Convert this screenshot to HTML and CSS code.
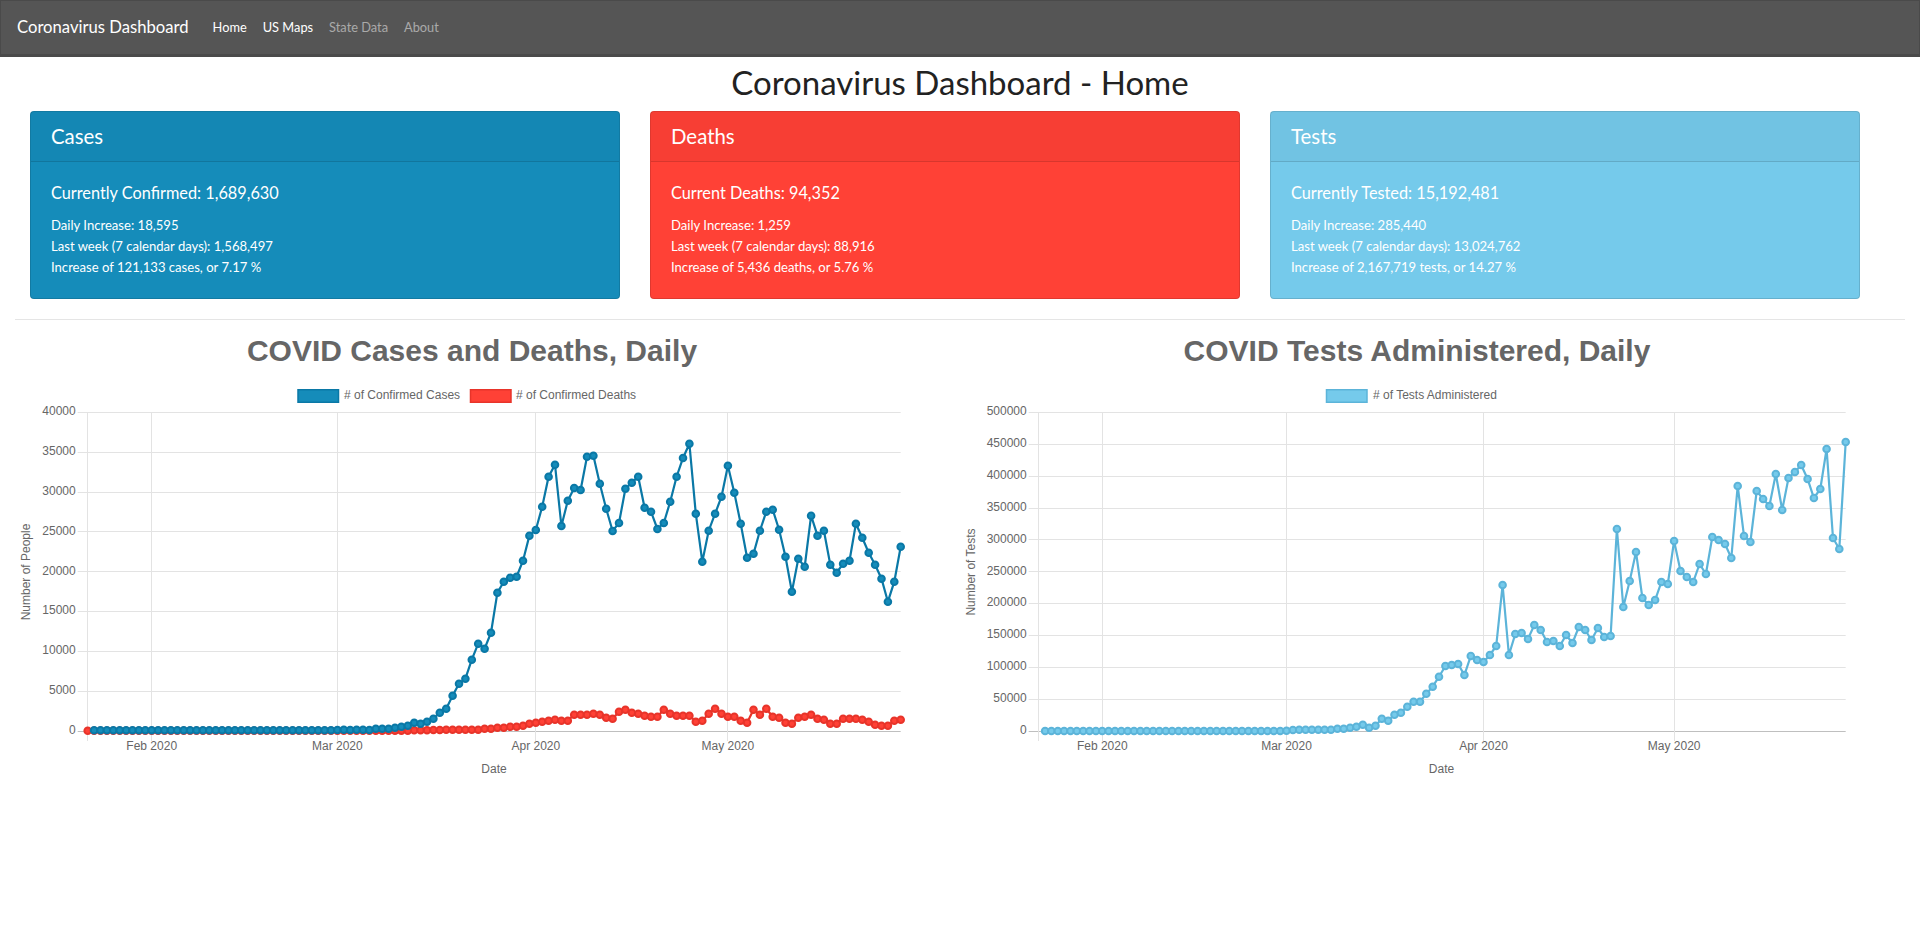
FILE: index.html
```html
<!DOCTYPE html>
<html>
<head>
  <title>Coronavirus Dashboard</title>
  <meta charset="utf-8" />
  <link rel="stylesheet" href="styles.css">
</head>
<body>
  <nav class="navbar">
    <a class="navbar-brand" href="#">Coronavirus Dashboard</a>
    <ul class="navbar-nav">
      <li><a class="nav-link active" href="#">Home</a></li>
      <li><a class="nav-link active" href="#">US Maps</a></li>
      <li><a class="nav-link" href="#">State Data</a></li>
      <li><a class="nav-link" href="#">About</a></li>
    </ul>
  </nav>

  <h1 class="page-title">Coronavirus Dashboard - Home</h1>

  <div class="cards">
    <div class="card card-primary">
      <div class="card-header">Cases</div>
      <div class="card-body">
        <h5 class="card-title">Currently Confirmed: 1,689,630</h5>
        <p class="card-text">
          Daily Increase: 18,595<br>
          Last week (7 calendar days): 1,568,497<br>
          Increase of 121,133 cases, or 7.17 %
        </p>
      </div>
    </div>
    <div class="card card-danger">
      <div class="card-header">Deaths</div>
      <div class="card-body">
        <h5 class="card-title">Current Deaths: 94,352</h5>
        <p class="card-text">
          Daily Increase: 1,259<br>
          Last week (7 calendar days): 88,916<br>
          Increase of 5,436 deaths, or 5.76 %
        </p>
      </div>
    </div>
    <div class="card card-info">
      <div class="card-header">Tests</div>
      <div class="card-body">
        <h5 class="card-title">Currently Tested: 15,192,481</h5>
        <p class="card-text">
          Daily Increase: 285,440<br>
          Last week (7 calendar days): 13,024,762<br>
          Increase of 2,167,719 tests, or 14.27 %
        </p>
      </div>
    </div>
  </div>

  <hr class="divider">

  <div class="charts">
    <svg class="chart" id="casesChart" width="915" height="470"></svg>
    <svg class="chart" id="testsChart" width="915" height="470"></svg>
  </div>

  <script src="charts.js"></script>
</body>
</html>
```

FILE: styles.css
```css
body {
  margin: 0;
  font-family: "Lato", "Open Sans", sans-serif;
  font-size: 13.1px;
  line-height: 21px;
  color: #222;
  background: #fff;
}
.navbar {
  display: flex;
  align-items: center;
  height: 53px;
  padding-left: 16px;
  background-color: #555;
  border: 1px solid #4a4a4a;
  border-bottom-width: 3px;
}
.navbar-brand {
  margin-right: 16px;
  font-size: 16.65px;
  color: #fff;
  text-decoration: none;
}
.navbar-nav {
  display: flex;
  gap: 16px;
  margin: 0;
  padding: 0 0 0 8px;
  font-size: 12.8px;
  list-style: none;
}
.nav-link {
  color: rgba(255, 255, 255, 0.5);
  text-decoration: none;
}
.nav-link.active {
  color: #fff;
}
.page-title {
  margin: 0 0 4px;
  font-size: 33px;
  font-weight: 400;
  line-height: 50px;
  text-align: center;
}
.cards {
  display: grid;
  grid-template-columns: repeat(3, 590px);
  gap: 30px;
  padding: 0 30px;
}
.card {
  border: 1px solid rgba(0, 0, 0, 0.125);
  border-radius: 4px;
  color: #fff;
}
.card-primary {
  background-color: #158cba;
}
.card-danger {
  background-color: #ff4136;
}
.card-info {
  background-color: #75caeb;
}
.card-header {
  padding: 12px 20px;
  font-size: 20.4px;
  line-height: 25px;
  background-color: rgba(0, 0, 0, 0.03);
  border-bottom: 1px solid rgba(0, 0, 0, 0.125);
}
.card-body {
  padding: 20px;
}
.card-title {
  margin: 0 0 12px;
  font-size: 16.3px;
  font-weight: 400;
  line-height: 21px;
}
.card-text {
  margin: 0;
}
.divider {
  height: 1px;
  margin: 20px 15px 0;
  border: 0;
  background-color: #e5e5e5;
}
.charts {
  display: flex;
  gap: 30px;
  padding: 0 15px;
}
.chart {
  display: block;
  font-family: "Liberation Sans", Arial, sans-serif;
  font-size: 12px;
  fill: #666;
}
.chart-title {
  font-size: 30px;
  font-weight: 700;
  text-anchor: middle;
}
.tick-y {
  text-anchor: end;
}
.tick-x,
.axis-title {
  text-anchor: middle;
}
.grid-line {
  stroke: #e3e3e3;
  stroke-width: 1;
}
.zero-line {
  stroke: #bfbfbf;
  stroke-width: 1;
}
.series-line {
  fill: none;
  stroke-width: 2.2;
}
.series-point {
  stroke-width: 2;
}
.legend-box {
  stroke-width: 1.5;
}
.cases .series-line,
.cases .series-point,
.cases.legend-box {
  stroke: #0a78a6;
}
.cases .series-point,
.cases.legend-box {
  fill: #158cba;
}
.deaths .series-line,
.deaths .series-point,
.deaths.legend-box {
  stroke: #e8342a;
}
.deaths .series-point,
.deaths.legend-box {
  fill: #ff4136;
}
.tests .series-line,
.tests .series-point,
.tests.legend-box {
  stroke: #5cb4d9;
}
.tests .series-point,
.tests.legend-box {
  fill: #75caeb;
}
```

FILE: charts.js
```js
// daily numbers, as y positions in 1/3 px on the page (early = from y 380, late = from y 420)
function repeat(v, n) {
  return new Array(n).fill(v);
}
function ys(early, late) {
  return early.map(v => 380 + v / 3).concat(late.map(v => 420 + v / 3));
}

const casesY = ys(
  repeat(1051, 38).concat([1050, 1049, 1050, 1049, 1049, 1050, 1046, 1046, 1046, 1043, 1040, 1037, 1028, 1031, 1025, 1016, 998, 986, 947, 911, 896, 839, 791]),
  [686, 638, 518, 485, 473, 470, 422, 347,
   330, 260, 170, 134, 318, 242, 204, 210, 110, 107, 191, 266, 333, 309, 206, 188, 170, 263, 275, 327, 309, 245, 170, 114, 71, 281, 425, 332, 281, 230,
   137, 218, 311, 413, 401, 332, 275, 269, 329, 410, 515, 416, 440, 287, 347, 332, 434, 458, 431, 422, 311, 353, 398, 434, 476, 545, 485, 380]
);
const deathsY = ys(
  repeat(1052, 51).concat([1051, 1051, 1051, 1050, 1050, 1049, 1049, 1049, 1049, 1049, 1049]),
  [926, 926, 923, 923, 920, 920, 917, 911,
   908, 905, 902, 899, 902, 902, 884, 884, 884, 881, 884, 893, 896, 875, 869, 878, 881, 887, 890, 890, 869, 881, 887, 887, 887, 905, 902, 881, 866, 881,
   890, 890, 902, 908, 869, 884, 866, 890, 893, 908, 911, 893, 890, 884, 896, 899, 911, 911, 896, 896, 896, 899, 905, 914, 917, 917, 902, 899]
);
const testsY = ys(
  repeat(1053, 38).concat([1052, 1050, 1049, 1049, 1049, 1049, 1049, 1049, 1046, 1046, 1043, 1040, 1034, 1043, 1037, 1016, 1022, 1004, 998, 980, 965, 965, 941, 920, 890]),
  [738, 735, 732, 765, 708, 720,
   726, 705, 678, 495, 705, 642, 639, 657, 615, 630, 666, 663, 678, 645, 669, 621, 630, 660, 624, 651, 648, 327, 561, 483, 396, 534, 555, 540, 486, 492,
   363, 453, 471, 486, 432, 462, 351, 360, 372, 414, 198, 348, 366, 213, 237, 258, 162, 270, 174, 156, 135, 177, 234, 207, 87, 354, 387, 66]
);

const DAYS = 127; // Jan 22 to May 28
const MONTHS = [["Feb 2020", 10], ["Mar 2020", 39], ["Apr 2020", 70], ["May 2020", 100]];
const TOP = 92;
const ZERO = 411;
const PAGE_TOP = 320;

function add(svg, tag, attrs, text) {
  const el = document.createElementNS("http://www.w3.org/2000/svg", tag);
  for (const k in attrs) el.setAttribute(k, attrs[k]);
  if (text) el.textContent = text;
  svg.appendChild(el);
  return el;
}

function drawChart(svg, opts) {
  const x0 = opts.left;
  const x1 = 885.7;
  const step = (x1 - x0) / DAYS;
  const snapX = v => Math.floor(v) + 0.5;
  const snapY = v => Math.round(v - 0.2) + 0.5;

  add(svg, "text", { class: "chart-title", x: opts.titleX, y: 40.5 }, opts.title);

  opts.legend.forEach(item => {
    add(svg, "rect", { class: "legend-box " + item.name, x: item.box, y: 69.75, width: 40.5, height: 12.5 });
    add(svg, "text", { x: item.text, y: 79 }, item.label);
  });

  // horizontal grid
  const n = opts.ticks.length - 1;
  opts.ticks.forEach((label, i) => {
    const y = TOP + (ZERO - TOP) * i / n;
    add(svg, "line", { class: i === n ? "zero-line" : "grid-line", x1: x0 - 10, x2: x1, y1: snapY(y), y2: snapY(y) });
    add(svg, "text", { class: "tick-y", x: x0 - 12, y: y + 3 }, label);
  });

  // vertical grid
  add(svg, "line", { class: "grid-line", x1: snapX(x0), x2: snapX(x0), y1: TOP, y2: ZERO + 10 });
  MONTHS.forEach(m => {
    const x = x0 + m[1] * step;
    add(svg, "line", { class: "grid-line", x1: snapX(x), x2: snapX(x), y1: TOP, y2: ZERO + 10 });
    add(svg, "text", { class: "tick-x", x: x, y: ZERO + 19 }, m[0]);
  });

  add(svg, "text", { class: "axis-title", transform: "translate(" + opts.yTitleX + " 252) rotate(-90)" }, opts.yTitle);
  add(svg, "text", { class: "axis-title", x: opts.xTitleX, y: 453 }, "Date");

  // first series goes on top, like the chart library does
  opts.series.slice().reverse().forEach(s => {
    const g = add(svg, "g", { class: s.name });
    const first = s.ys.length === DAYS + 1 ? 0 : 1;
    const pts = s.ys.map((y, i) => [x0 + (i + first) * step, y - PAGE_TOP]);
    add(g, "polyline", { class: "series-line", points: pts.map(p => p[0].toFixed(1) + "," + p[1].toFixed(1)).join(" ") });
    pts.forEach(p => {
      add(g, "circle", { class: "series-point", cx: p[0].toFixed(1), cy: p[1].toFixed(1), r: 3.3 });
    });
  });
}

drawChart(document.getElementById("casesChart"), {
  left: 72.7,
  title: "COVID Cases and Deaths, Daily",
  titleX: 457,
  yTitle: "Number of People",
  yTitleX: 15,
  xTitleX: 479,
  ticks: ["40000", "35000", "30000", "25000", "20000", "15000", "10000", "5000", "0"],
  legend: [
    { name: "cases", box: 283, text: 329, label: "# of Confirmed Cases" },
    { name: "deaths", box: 455.5, text: 501, label: "# of Confirmed Deaths" }
  ],
  series: [
    { name: "cases", ys: casesY },
    { name: "deaths", ys: deathsY }
  ]
});

drawChart(document.getElementById("testsChart"), {
  left: 78.7,
  title: "COVID Tests Administered, Daily",
  titleX: 457,
  yTitle: "Number of Tests",
  yTitleX: 15,
  xTitleX: 481.5,
  ticks: ["500000", "450000", "400000", "350000", "300000", "250000", "200000", "150000", "100000", "50000", "0"],
  legend: [
    { name: "tests", box: 366.5, text: 413, label: "# of Tests Administered" }
  ],
  series: [
    { name: "tests", ys: testsY }
  ]
});
```
